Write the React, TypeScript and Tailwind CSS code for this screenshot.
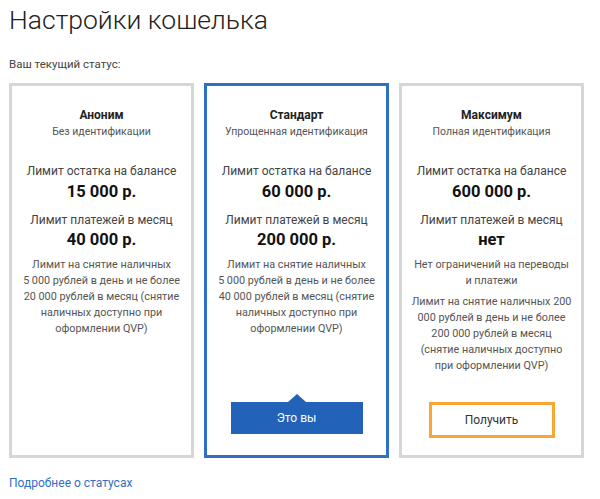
import React from 'react';

const cards = [
  {
    title: 'Аноним',
    sub: 'Без идентификации',
    balance: '15 000 р.',
    payments: '40 000 р.',
    notes: [
      ['Лимит на снятие наличных', '5 000 рублей в день и не более', '20 000 рублей в месяц (снятие', 'наличных доступно при', 'оформлении QVP)'],
    ],
    state: 'none',
  },
  {
    title: 'Стандарт',
    sub: 'Упрощенная идентификация',
    balance: '60 000 р.',
    payments: '200 000 р.',
    notes: [
      ['Лимит на снятие наличных', '5 000 рублей в день и не более', '40 000 рублей в месяц (снятие', 'наличных доступно при', 'оформлении QVP)'],
    ],
    state: 'current',
  },
  {
    title: 'Максимум',
    sub: 'Полная идентификация',
    balance: '600 000 р.',
    payments: 'нет',
    notes: [
      ['Нет ограничений на переводы', 'и платежи'],
      ['Лимит на снятие наличных 200', '000 рублей в день и не более', '200 000 рублей в месяц', '(снятие наличных доступно', 'при оформлении QVP)'],
    ],
    state: 'get',
  },
];

const App = () => {
  return (
    <div className="w-[600px] h-[499px] bg-white text-[#333] overflow-hidden" style={{ fontFamily: 'Roboto, "Open Sans", sans-serif' }}>
      <div className="pl-[9px]">
        <h1 className="text-[26.5px] font-light text-[#222] leading-[40px]">Настройки кошелька</h1>
        <p className="mt-[16px] text-[11.5px] leading-[16px] text-[#444]">Ваш текущий статус:</p>

        <div className="mt-[11px] flex gap-[10px]">
          {cards.map((c, i) => (
            <div
              key={i}
              className={`w-[185px] h-[375px] border-[3px] flex flex-col items-center text-center ${
                c.state === 'current' ? 'border-[#2f6fc6]' : 'border-[#d6d6d6]'
              }`}
            >
              <div className="mt-[21px] text-[12px] font-bold leading-[16px] text-[#222]">{c.title}</div>
              <div className="mt-[1px] text-[10.5px] leading-[15px] text-[#555]">{c.sub}</div>

              <div className="mt-[24px] text-[12px] leading-[17px] text-[#444]">Лимит остатка на балансе</div>
              <div className="mt-[1px] text-[16.5px] font-bold leading-[22px] text-[#111]">{c.balance}</div>

              <div className="mt-[9px] text-[12px] leading-[17px] text-[#444]">Лимит платежей в месяц</div>
              <div className="mt-0 text-[16.5px] font-bold leading-[22px] text-[#111]">{c.payments}</div>

              <div className="mt-[6px] flex flex-col gap-[5px]">
                {c.notes.map((n, j) => (
                  <p key={j} className="text-[10.8px] leading-[16px] text-[#555]">
                    {n.map((line, k) => (
                      <span key={k} className="block">{line}</span>
                    ))}
                  </p>
                ))}
              </div>

              <div className="flex-1" />

              {c.state === 'current' && (
                <div className="relative mb-[21px] w-[132px] h-[32px] bg-[#2263b9] text-white text-[12px] flex items-center justify-center">
                  <span className="absolute -top-[8px] left-1/2 -translate-x-1/2 w-0 h-0 border-l-[9px] border-r-[9px] border-b-[8px] border-l-transparent border-r-transparent border-b-[#2263b9]" />
                  Это вы
                </div>
              )}
              {c.state === 'get' && (
                <div className="mb-[17px] w-[126px] h-[36px] border-[3px] border-[#f9a634] bg-white text-[#333] text-[12px] flex items-center justify-center">
                  Получить
                </div>
              )}
            </div>
          ))}
        </div>

        <a className="block mt-[17px] text-[12px] leading-[16px] text-[#2f6fc6]">Подробнее о статусах</a>
      </div>
    </div>
  );
};

export default App;
